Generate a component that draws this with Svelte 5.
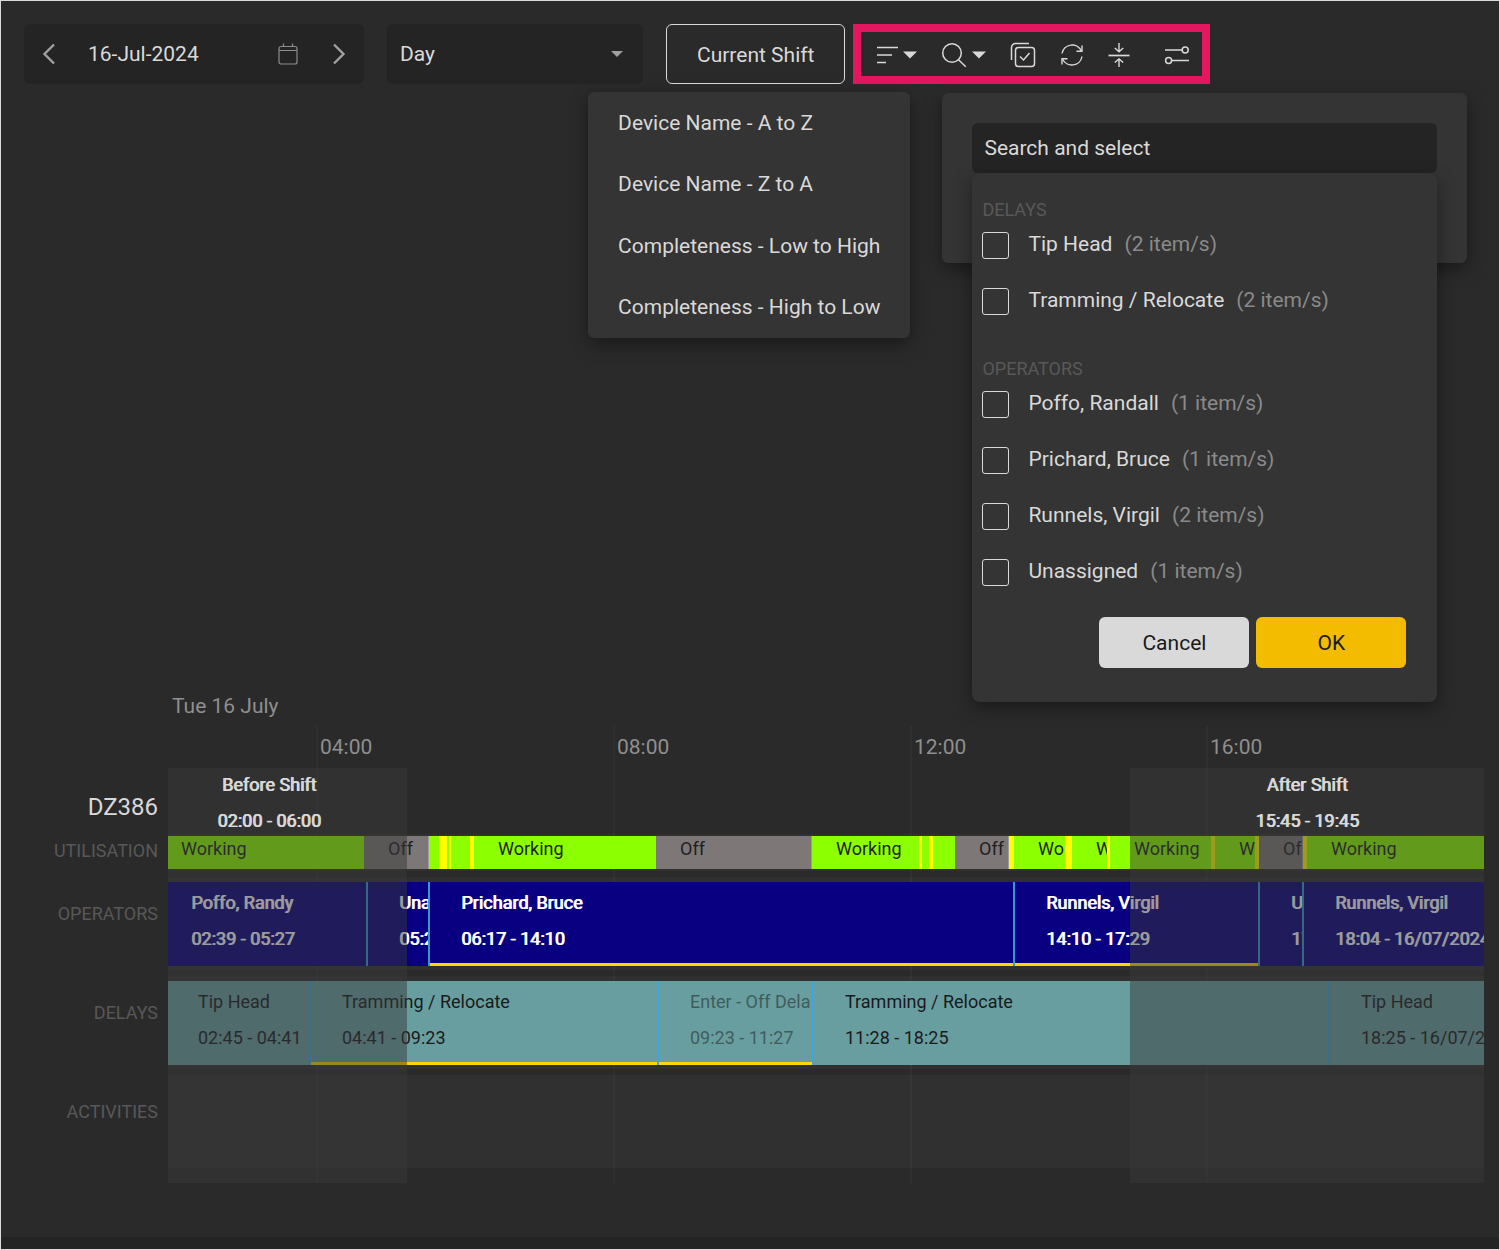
<script lang="ts">
  type Segment = {
    from: number;
    to: number;
    kind: string;
    title?: string;
    time?: string;
    flagged?: boolean;
    muted?: boolean;
  };

  // Every position below is expressed on a track of this length
  const TRACK = 1316;

  const sortOptions = [
    'Device Name - A to Z',
    'Device Name - Z to A',
    'Completeness - Low to High',
    'Completeness - High to Low',
  ];

  const filterGroups = [
    {
      name: 'Delays',
      items: [
        { label: 'Tip Head', count: 2 },
        { label: 'Tramming / Relocate', count: 2 },
      ],
    },
    {
      name: 'Operators',
      items: [
        { label: 'Poffo, Randall', count: 1 },
        { label: 'Prichard, Bruce', count: 1 },
        { label: 'Runnels, Virgil', count: 2 },
        { label: 'Unassigned', count: 1 },
      ],
    },
  ];

  const ticks = [
    { at: 148, label: '04:00' },
    { at: 445, label: '08:00' },
    { at: 742, label: '12:00' },
    { at: 1038, label: '16:00' },
  ];

  const shifts = [
    { from: -37, to: 239, title: 'Before Shift', time: '02:00 - 06:00' },
    { from: 962, to: 1316, title: 'After Shift', time: '15:45 - 19:45' },
  ];

  const utilisation: Segment[] = [
    { from: -11, to: 196, kind: 'working', title: 'Working' },
    { from: 196, to: 261, kind: 'off', title: 'Off' },
    { from: 261, to: 271, kind: 'working' },
    { from: 271, to: 279, kind: 'idle' },
    { from: 279, to: 281, kind: 'working' },
    { from: 281, to: 283, kind: 'idle' },
    { from: 283, to: 302, kind: 'working' },
    { from: 302, to: 306, kind: 'idle' },
    { from: 306, to: 488, kind: 'working', title: 'Working' },
    { from: 488, to: 644, kind: 'off', title: 'Off' },
    { from: 644, to: 751, kind: 'working', title: 'Working' },
    { from: 751, to: 754, kind: 'idle' },
    { from: 754, to: 761, kind: 'working' },
    { from: 761, to: 765, kind: 'idle' },
    { from: 765, to: 787, kind: 'working' },
    { from: 787, to: 841, kind: 'off', title: 'Off' },
    { from: 841, to: 846, kind: 'idle' },
    { from: 846, to: 897, kind: 'working', title: 'Working' },
    { from: 897, to: 904, kind: 'idle' },
    { from: 904, to: 939, kind: 'working', title: 'Working' },
    { from: 939, to: 942, kind: 'idle' },
    { from: 942, to: 1043, kind: 'working', title: 'Working' },
    { from: 1043, to: 1047, kind: 'idle' },
    { from: 1047, to: 1087, kind: 'working', title: 'Working' },
    { from: 1087, to: 1091, kind: 'idle' },
    { from: 1091, to: 1135, kind: 'off', title: 'Off' },
    { from: 1135, to: 1139, kind: 'idle' },
    { from: 1139, to: 1330, kind: 'working', title: 'Working' },
  ];

  const operators: Segment[] = [
    { from: -9, to: 199, kind: 'operator', title: 'Poffo, Randy', time: '02:39 - 05:27' },
    { from: 199, to: 261, kind: 'operator', title: 'Unassigned', time: '05:27 - 06:17' },
    { from: 261, to: 846, kind: 'operator', title: 'Prichard, Bruce', time: '06:17 - 14:10', flagged: true },
    { from: 846, to: 1091, kind: 'operator', title: 'Runnels, Virgil', time: '14:10 - 17:29', flagged: true },
    { from: 1091, to: 1135, kind: 'operator', title: 'Unassigned', time: '17:29 - 18:04' },
    { from: 1135, to: 1400, kind: 'operator', title: 'Runnels, Virgil', time: '18:04 - 16/07/2024' },
  ];

  const delays: Segment[] = [
    { from: -2, to: 142, kind: 'delay', title: 'Tip Head', time: '02:45 - 04:41' },
    { from: 142, to: 490, kind: 'delay', title: 'Tramming / Relocate', time: '04:41 - 09:23', flagged: true },
    { from: 490, to: 645, kind: 'delay', title: 'Enter - Off Delay', time: '09:23 - 11:27', flagged: true, muted: true },
    { from: 645, to: 1161, kind: 'delay', title: 'Tramming / Relocate', time: '11:28 - 18:25' },
    { from: 1161, to: 1400, kind: 'delay', title: 'Tip Head', time: '18:25 - 16/07/2024' },
  ];

  const rows = [
    { name: 'Utilisation', segments: utilisation, compact: true },
    { name: 'Operators', segments: operators, compact: false },
    { name: 'Delays', segments: delays, compact: false },
    { name: 'Activities', segments: [] as Segment[], compact: false },
  ];

  let date = $state('16-Jul-2024');
  let period = $state('Day');
  let query = $state('');
  let checked: Record<string, boolean> = $state({});

  function place(from: number, to: number) {
    return `left: ${(from / TRACK) * 100}%; width: ${((to - from) / TRACK) * 100}%`;
  }

  function clearFilters() {
    checked = {};
    query = '';
  }
</script>

{#snippet caret()}
  <svg class="caret" width="14" height="8" viewBox="0 0 14 8" aria-hidden="true">
    <path d="M0 0.5h14L7 7.5z" fill="currentColor" />
  </svg>
{/snippet}

<div class="page">
  <header class="toolbar">
    <div class="date-picker">
      <button type="button" class="icon-button" aria-label="Previous day">
        <svg width="14" height="22" viewBox="0 0 14 22" fill="none" stroke="currentColor" stroke-width="2.4">
          <path d="M12 1.5 2.5 11l9.500 9.500" />
        </svg>
      </button>
      <input class="date-input" type="text" aria-label="Date" bind:value={date} />
      <button type="button" class="icon-button calendar" aria-label="Open calendar">
        <svg width="20" height="22" viewBox="0 0 20 22" fill="none" stroke="currentColor" stroke-width="1.2">
          <rect x="1" y="3.500" width="18" height="17.500" rx="2" />
          <path d="M1 7.500h18M5.500 0.500v3M14.500 0.500v3" />
        </svg>
      </button>
      <button type="button" class="icon-button" aria-label="Next day">
        <svg width="14" height="22" viewBox="0 0 14 22" fill="none" stroke="currentColor" stroke-width="2.4">
          <path d="M2 1.5 11.500 11 2 20.500" />
        </svg>
      </button>
    </div>

    <div class="period">
      <select aria-label="Period" bind:value={period}>
        <option>Day</option>
        <option>Week</option>
      </select>
      <svg class="period-caret" width="12" height="6" viewBox="0 0 12 6" aria-hidden="true">
        <path d="M0 0h12L6 6z" fill="currentColor" />
      </svg>
    </div>

    <div class="actions">
      <button type="button" class="shift-button">Current Shift</button>

      <div class="tools">
        <div class="tool">
          <button type="button" class="tool-button" aria-label="Sort">
            <svg width="22" height="18" viewBox="0 0 22 18" fill="none" stroke="currentColor" stroke-width="1.4">
              <path d="M1 1.500h21M1 9h15M1 16.500h9" />
            </svg>
            {@render caret()}
          </button>
          <div class="sort-menu">
            {#each sortOptions as option}
              <button type="button" class="sort-item">{option}</button>
            {/each}
          </div>
        </div>

        <div class="tool">
          <button type="button" class="tool-button" aria-label="Search">
            <svg width="26" height="26" viewBox="0 0 26 26" fill="none" stroke="currentColor" stroke-width="1.5">
              <circle cx="11" cy="11" r="9.300" />
              <path d="m17.500 17.800 7.300 7" />
            </svg>
            {@render caret()}
          </button>
          <div class="search-panel">
            <div class="search-field">
              <input class="search-input" type="text" placeholder="Search and select" aria-label="Search and select" bind:value={query} />
              <div class="results">
                {#each filterGroups as group}
                  <fieldset class="group">
                    <legend>{group.name}</legend>
                    {#each group.items as item}
                      <label class="result">
                        <input type="checkbox" bind:checked={checked[item.label]} />
                        <span class="result-name">{item.label}</span>
                        <span class="result-count">({item.count} item/s)</span>
                      </label>
                    {/each}
                  </fieldset>
                {/each}
                <div class="buttons">
                  <button type="button" class="cancel" onclick={clearFilters}>Cancel</button>
                  <button type="button" class="ok">OK</button>
                </div>
              </div>
            </div>
          </div>
        </div>

        <button type="button" class="tool-button" aria-label="Select all">
          <svg width="26" height="26" viewBox="0 0 26 26" fill="none" stroke="currentColor" stroke-width="1.500">
            <rect x="5.500" y="5.500" width="19" height="19" rx="3" />
            <path d="M1.500 18V5.500a4 4 0 0 1 4-4H19" />
            <path d="m10 14.500 3.500 3.500 6-7" />
          </svg>
        </button>

        <button type="button" class="tool-button" aria-label="Refresh">
          <svg width="24" height="24" viewBox="0 0 24 24" fill="none" stroke="currentColor" stroke-width="1.400">
            <path d="M2 10.500A10.300 10.300 0 0 1 21.500 8M22 13.500A10.300 10.300 0 0 1 2.500 16" />
            <path d="M22 2.500V8.300h-5.500M2 21.500v-5.800h5.500" />
          </svg>
        </button>

        <button type="button" class="tool-button" aria-label="Collapse rows">
          <svg width="22" height="26" viewBox="0 0 22 26" fill="none" stroke="currentColor" stroke-width="1.400">
            <path d="M0.500 13.500h21" stroke-width="1.700" />
            <path d="M11 1v8.500M6.800 6 11 9.800 15.200 6M11 25v-7.500M6.800 20.500 11 17l4.200 3.500" />
          </svg>
        </button>

        <button type="button" class="tool-button settings" aria-label="Settings">
          <svg width="26" height="22" viewBox="0 0 26 22" fill="none" stroke="currentColor" stroke-width="1.500">
            <path d="M1 6h17M8 16.500h17" />
            <circle cx="21.200" cy="6" r="3" />
            <circle cx="4.600" cy="16.500" r="3" />
          </svg>
        </button>
      </div>
    </div>
  </header>

  <main class="timeline">
    <div class="labels">
      <h1>DZ386</h1>
      {#each rows as row}
        <div class="label" class:compact={row.compact}>{row.name}</div>
      {/each}
    </div>

    <div class="tracks">
      <div class="day">Tue 16 July</div>
      <div class="axis">
        {#each ticks as tick}
          <div class="tick" style={`left: ${(tick.at / TRACK) * 100}%`}>{tick.label}</div>
        {/each}
      </div>

      <div class="board">
        {#each ticks as tick}
          <div class="grid-line" style={`left: ${(tick.at / TRACK) * 100}%`}></div>
        {/each}

        {#each rows as row}
          <div class="row" class:compact={row.compact}>
            <div class="lane">
              {#each row.segments as segment}
                <div
                  class="segment {segment.kind}"
                  class:flagged={segment.flagged}
                  class:muted={segment.muted}
                  style={place(segment.from, segment.to)}
                >
                  {#if segment.title}<div class="text">{segment.title}</div>{/if}
                  {#if segment.time}<div class="text">{segment.time}</div>{/if}
                </div>
              {/each}
            </div>
          </div>
        {/each}

        {#each shifts as shift}
          <div class="shift" style={place(shift.from, shift.to)}>
            <span>{shift.title}</span>
            <span>{shift.time}</span>
          </div>
        {/each}
      </div>
    </div>
  </main>

  <footer class="scrollbar"></footer>
</div>

<style>
  :global(body) {
    background: #2a2a2a;
  }

  .page {
    box-sizing: border-box;
    min-height: 100vh;
    display: flex;
    flex-direction: column;
    background: #2a2a2a;
    border: 1px solid #d9dcdc;
    color: #d9d9d9;
    font-family: Roboto, sans-serif;
    font-size: 21px;
    line-height: 24px;
  }

  button,
  input,
  select {
    font: inherit;
    color: inherit;
  }

  button {
    cursor: pointer;
  }

  svg {
    display: block;
    flex: none;
  }

  .toolbar {
    display: flex;
    gap: 23px;
    padding: 23px;
  }

  .date-picker,
  .period {
    box-sizing: border-box;
    height: 60px;
    background: #242424;
    border-radius: 6px;
  }

  .date-picker {
    display: flex;
    align-items: center;
    width: 340px;
    padding: 0 18px;
  }

  .icon-button {
    padding: 0;
    background: none;
    border: none;
    color: #a0a0a0;
  }

  .date-input {
    flex: 1;
    min-width: 0;
    padding: 0 0 0 32px;
    background: none;
    border: none;
    outline: none;
  }

  .calendar {
    margin-right: 34px;
    color: #8c8c8c;
  }

  .period {
    position: relative;
    width: 256px;
  }

  .period select {
    width: 100%;
    height: 100%;
    padding: 0 13px;
    appearance: none;
    background: none;
    border: none;
    outline: none;
  }

  .period-caret {
    position: absolute;
    right: 20px;
    top: 27px;
    color: #a0a0a0;
    pointer-events: none;
  }

  .actions {
    display: flex;
    gap: 8px;
  }

  .shift-button {
    padding: 2px 30px 0;
    background: none;
    border: 1px solid #d9d9d9;
    border-radius: 6px;
  }

  .tools {
    box-sizing: border-box;
    display: flex;
    align-items: center;
    gap: 24px;
    height: 60px;
    padding: 2px 12px 0 15px;
    border: 8px solid #e2175f;
  }

  .tool {
    position: relative;
  }

  .tool-button {
    display: flex;
    align-items: center;
    gap: 5px;
    height: 42px;
    padding: 0;
    background: none;
    border: none;
  }

  .settings {
    margin-left: 10px;
  }

  .sort-menu {
    position: absolute;
    top: 58px;
    right: 7px;
    z-index: 2;
    display: grid;
    grid-auto-rows: 1fr;
    min-height: 246px;
    background: #343434;
    border-radius: 6px;
    box-shadow: 0 6px 18px rgba(0, 0, 0, 0.4);
  }

  .sort-item {
    padding: 0 30px;
    background: none;
    border: none;
    text-align: left;
    white-space: nowrap;
  }

  .search-panel {
    position: absolute;
    top: 59px;
    left: 1px;
    z-index: 2;
    box-sizing: border-box;
    width: 525px;
    min-height: 170px;
    padding: 30px;
    background: #343434;
    border-radius: 6px;
    box-shadow: 0 6px 18px rgba(0, 0, 0, 0.4);
  }

  .search-field {
    position: relative;
  }

  .search-input {
    box-sizing: border-box;
    display: block;
    width: 100%;
    height: 50px;
    padding: 0 12px;
    background: #242424;
    border: none;
    border-radius: 6px;
    outline: none;
  }

  .search-input::placeholder {
    color: #d9d9d9;
    opacity: 1;
  }

  .results {
    position: absolute;
    top: 100%;
    left: 0;
    right: 0;
    padding: 26px 31px 34px 10px;
    background: #343434;
    border-radius: 8px;
    box-shadow: 0 6px 18px rgba(0, 0, 0, 0.4);
  }

  .group {
    margin: 0;
    padding: 0;
    border: none;
  }

  .group + .group {
    margin-top: 18px;
  }

  .group legend {
    margin-bottom: 7px;
    padding: 0;
    color: #585858;
    font-size: 18px;
    line-height: 22px;
    text-transform: uppercase;
  }

  .result {
    display: flex;
    height: 52px;
    padding-top: 4px;
  }

  .result input {
    width: 27px;
    height: 27px;
    margin: 0 19px 0 0;
    appearance: none;
    border: 1px solid #d9d9d9;
    border-radius: 3px;
  }

  .result input:checked {
    background: #f3bc00;
  }

  .result-count {
    margin-left: 12px;
    color: #8a8a8a;
  }

  .buttons {
    display: flex;
    justify-content: flex-end;
    gap: 7px;
    margin-top: 6px;
  }

  .buttons button {
    width: 150px;
    height: 51px;
    border: none;
    border-radius: 6px;
    color: #1a1a1a;
  }

  .cancel {
    background: #d9d9d9;
  }

  .ok {
    background: #f3bc00;
  }

  .timeline {
    display: flex;
    margin-top: auto;
    padding: 0 15px 54px 0;
  }

  .labels {
    box-sizing: border-box;
    width: 167px;
    padding: 105px 10px 0 0;
    text-align: right;
  }

  h1 {
    height: 39px;
    margin: 0;
    font-size: 24px;
    font-weight: 400;
    line-height: 24px;
  }

  .label {
    height: 93px;
    margin-bottom: 6px;
    color: #585858;
    font-size: 18px;
    line-height: 74px;
    text-transform: uppercase;
  }

  .label.compact {
    height: 37px;
    line-height: 34px;
  }

  .tracks {
    flex: 1;
    min-width: 0;
  }

  .day {
    height: 36px;
    padding-left: 4px;
    color: #8f8f8f;
    line-height: 32px;
  }

  .axis {
    position: relative;
    height: 42px;
    overflow: hidden;
  }

  .tick {
    position: absolute;
    top: 0;
    padding-left: 2px;
    border-left: 2px solid #303030;
    color: #8f8f8f;
    line-height: 42px;
  }

  .board {
    position: relative;
    padding: 66px 0 15px;
    overflow: hidden;
  }

  .grid-line {
    position: absolute;
    top: 0;
    bottom: 0;
    width: 2px;
    background: #303030;
  }

  .row {
    position: relative;
    box-sizing: border-box;
    height: 93px;
    padding: 5px 0 4px;
    background: rgba(255, 255, 255, 0.03);
  }

  .row.compact {
    height: 37px;
    padding: 2px 0;
  }

  .row + .row {
    margin-top: 6px;
  }

  .lane {
    position: relative;
    height: 100%;
    overflow: hidden;
  }

  .segment {
    position: absolute;
    top: 0;
    bottom: 0;
    box-sizing: border-box;
    overflow: hidden;
    font-size: 18px;
    white-space: nowrap;
  }

  .working,
  .off {
    padding-left: 24px;
    color: #1f1f1f;
    line-height: 26px;
  }

  .working {
    background: #8cff00;
  }

  .off {
    background: #7d7777;
    border-right: 1px solid #a09a9a;
  }

  .idle {
    background: #ffff00;
  }

  .operator,
  .delay {
    padding: 3px 0 0 31px;
    border: 0 solid #3399cc;
    border-width: 0 1px;
    line-height: 36px;
  }

  .operator {
    background: #080080;
    color: #ffffff;
    text-shadow: 1px 0 0 currentColor;
  }

  .delay {
    background: #689ea0;
    border-color: #3da5e0;
    color: #1a1a1a;
  }

  .muted .text {
    overflow: hidden;
    margin-right: 2px;
    opacity: 0.5;
  }

  .flagged::after {
    content: '';
    position: absolute;
    left: 0;
    right: 0;
    bottom: 0;
    height: 3px;
    background: #ffd700;
  }

  .shift {
    position: absolute;
    top: 0;
    bottom: 0;
    display: flex;
    flex-direction: column;
    gap: 2px;
    align-items: center;
    background: rgba(56, 56, 56, 0.5);
    font-size: 18px;
    line-height: 34px;
    text-shadow: 1px 0 0 currentColor;
  }

  .scrollbar {
    height: 12px;
    background: #242424;
  }
</style>
